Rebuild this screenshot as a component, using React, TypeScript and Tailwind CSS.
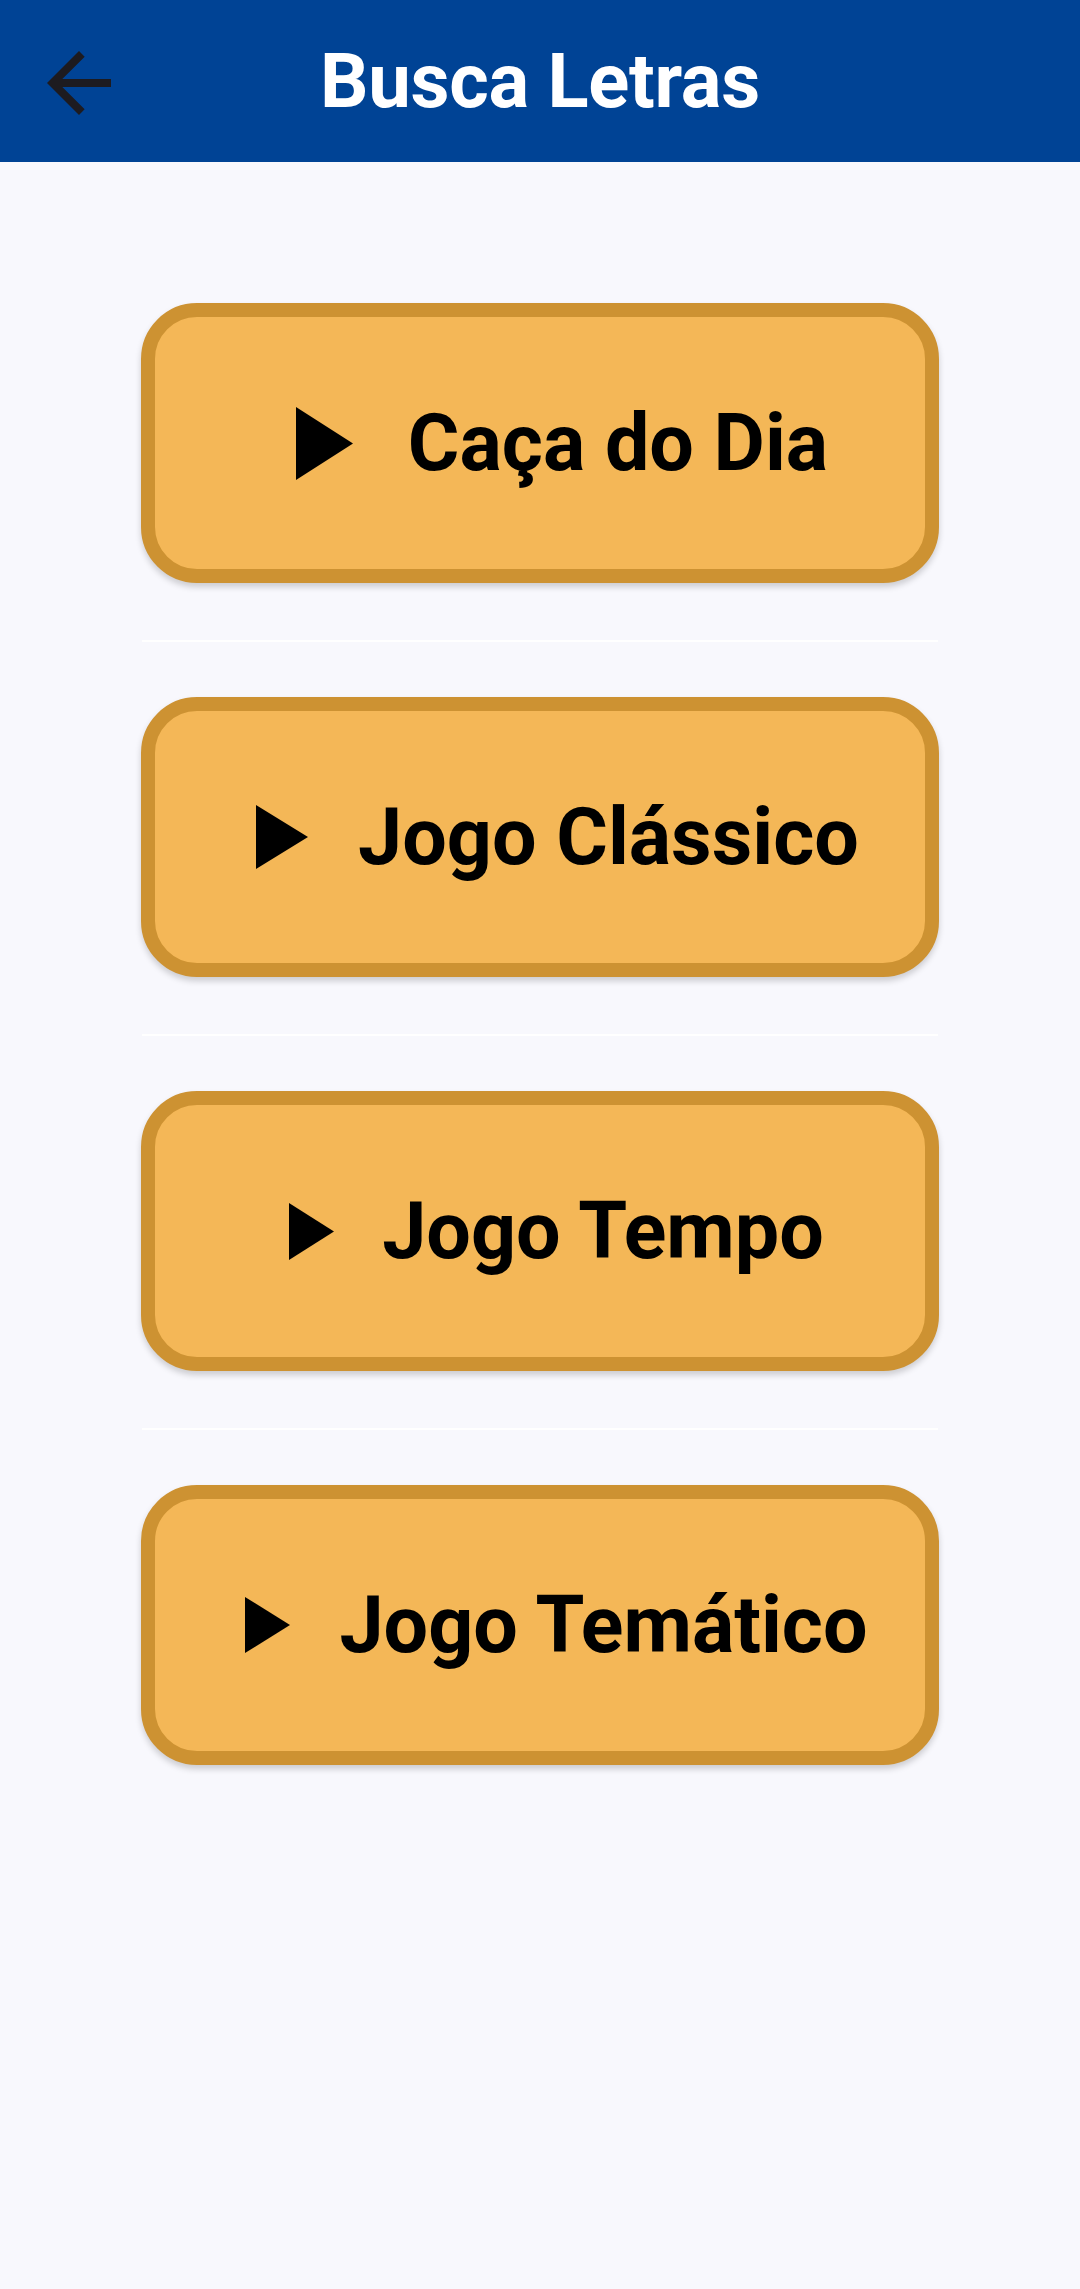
import React from "react";

type Item = { label: string; tw: number; th: number; gap: string; pl: string };

const items: Item[] = [
  { label: "Caça do Dia", tw: 57, th: 73, gap: "gap-[55px]", pl: "pl-[44px]" },
  { label: "Jogo Clássico", tw: 52, th: 64, gap: "gap-[50px]", pl: "pl-[35px]" },
  { label: "Jogo Tempo", tw: 45, th: 57, gap: "gap-[48px]", pl: "pl-[33px]" },
  { label: "Jogo Temático", tw: 45, th: 56, gap: "gap-[49px]", pl: "pl-[33px]" },
];

function Triangle({ w, h }: { w: number; h: number }) {
  return (
    <svg width={w} height={h} viewBox={`0 0 ${w} ${h}`} className="shrink-0">
      <polygon points={`0,0 ${w},${h / 2} 0,${h}`} fill="#000" />
    </svg>
  );
}

export default function App() {
  return (
    <div
      className="min-h-[2289px] w-[1080px] bg-[#f8f8fd] flex flex-col"
      style={{ fontFamily: "Roboto, 'Liberation Sans', sans-serif" }}
    >
      <header className="relative h-[162px] bg-[#004395] flex items-center justify-center shrink-0">
        <button className="absolute left-[31px] top-[35px] w-[96px] h-[96px] flex items-center justify-center">
          <svg width="96" height="96" viewBox="0 0 24 24">
            <path
              d="M20 11H7.83l5.59-5.59L12 4l-8 8 8 8 1.41-1.41L7.83 13H20v-2z"
              fill="#1d1b20"
            />
          </svg>
        </button>
        <h1 className="text-white font-bold text-[76px] leading-none tracking-[-0.3px]">
          Busca Letras
        </h1>
      </header>

      <main className="flex flex-col items-center pt-[141px]">
        {items.map((it, i) => (
          <React.Fragment key={it.label}>
            {i > 0 && (
              <div className="w-[796px] h-[2px] bg-white mt-[57px] mb-[55px]" />
            )}
            <button
              className={`w-[798px] h-[280px] rounded-[56px] border-[14px] border-[#cd9232] bg-[#f4b757] shadow-[0_4px_6px_rgba(0,0,0,0.18)] flex items-center justify-center ${it.pl}`}
            >
              <span className={`flex items-center ${it.gap}`}>
                <Triangle w={it.tw} h={it.th} />
                <span className="text-black font-bold text-[79px] leading-none">
                  {it.label}
                </span>
              </span>
            </button>
          </React.Fragment>
        ))}
      </main>
    </div>
  );
}
